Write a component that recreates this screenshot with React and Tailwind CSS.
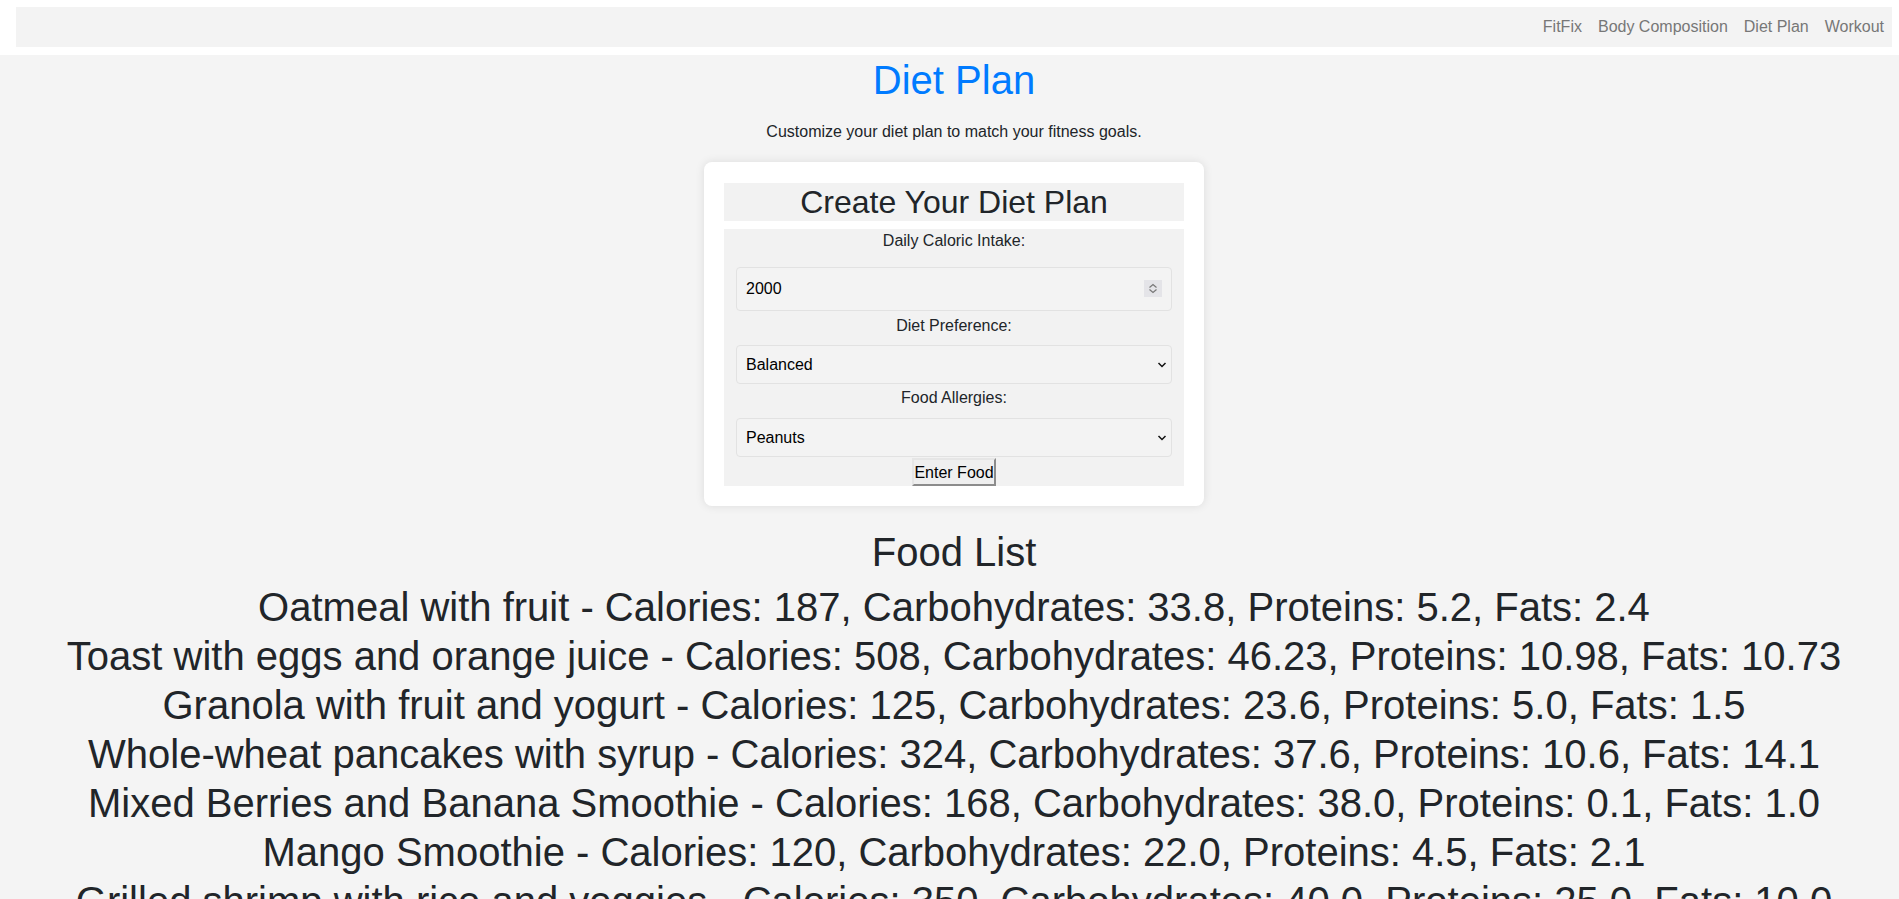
import { useState } from 'react';

const foods = [
  'Oatmeal with fruit - Calories: 187, Carbohydrates: 33.8, Proteins: 5.2, Fats: 2.4',
  'Toast with eggs and orange juice - Calories: 508, Carbohydrates: 46.23, Proteins: 10.98, Fats: 10.73',
  'Granola with fruit and yogurt - Calories: 125, Carbohydrates: 23.6, Proteins: 5.0, Fats: 1.5',
  'Whole-wheat pancakes with syrup - Calories: 324, Carbohydrates: 37.6, Proteins: 10.6, Fats: 14.1',
  'Mixed Berries and Banana Smoothie - Calories: 168, Carbohydrates: 38.0, Proteins: 0.1, Fats: 1.0',
  'Mango Smoothie - Calories: 120, Carbohydrates: 22.0, Proteins: 4.5, Fats: 2.1',
  'Grilled shrimp with rice and veggies - Calories: 350, Carbohydrates: 40.0, Proteins: 25.0, Fats: 10.0',
];

const Chevron = () => (
  <svg
    className="pointer-events-none absolute right-[5px] top-1/2 -translate-y-1/2"
    width="10"
    height="6"
    viewBox="0 0 10 6"
  >
    <path d="M1.5 1 L5 4.5 L8.5 1" fill="none" stroke="#111" strokeWidth="1.5" />
  </svg>
);

const SelectBox = ({ value, onChange, options, className = '' }) => (
  <div className={`relative h-[39px] ${className}`}>
    <select
      value={value}
      onChange={(e) => onChange(e.target.value)}
      className="h-full w-full appearance-none rounded border border-[#e2e2e2] bg-[#f3f3f3] pl-[9px] text-base text-black outline-none"
    >
      {options.map((o) => (
        <option key={o}>{o}</option>
      ))}
    </select>
    <Chevron />
  </div>
);

export default function App() {
  const [calories, setCalories] = useState('2000');
  const [pref, setPref] = useState('Balanced');
  const [allergy, setAllergy] = useState('Peanuts');

  return (
    <div className="h-screen overflow-hidden bg-white font-['Liberation_Sans',Arial,sans-serif] text-[#212529]">
      <header className="pt-[7px] pl-4 pr-[7px] pb-2">
        <nav className="flex h-10 items-center justify-end bg-[#f3f3f3] text-base text-[#777]">
          <a href="#" className="px-2">FitFix</a>
          <a href="#" className="px-2">Body Composition</a>
          <a href="#" className="px-2">Diet Plan</a>
          <a href="#" className="px-2">Workout</a>
        </nav>
      </header>

      <main className="h-full bg-[#f4f4f4]">
        <div className="ml-4 mr-[7px] pt-px text-center">
          <h1 className="text-[40px] leading-[48px] text-[#007bff]">Diet Plan</h1>
          <p className="mt-4 text-base leading-6">Customize your diet plan to match your fitness goals.</p>

          <div className="mx-auto mt-[18px] w-[500px] rounded-lg bg-white px-5 pt-[21px] pb-5 shadow-[0_0_10px_rgba(0,0,0,0.1)]">
            <h2 className="bg-[#f2f2f2] text-[32px] leading-[38px]">Create Your Diet Plan</h2>
            <form className="mt-2 flex flex-col bg-[#f2f2f2] px-3" onSubmit={(e) => e.preventDefault()}>
              <label className="block text-base leading-6">Daily Caloric Intake:</label>
              <div className="relative mt-[14px] h-[44px]">
                <input
                  type="text"
                  value={calories}
                  onChange={(e) => setCalories(e.target.value)}
                  className="h-full w-full rounded border border-[#e2e2e2] bg-[#f3f3f3] pl-[9px] text-base text-black outline-none"
                />
                <span className="pointer-events-none absolute right-[10px] top-[13px]">
                  <svg width="18" height="17" viewBox="0 0 18 17">
                    <rect width="18" height="17" fill="#e4e4e8" />
                    <path d="M5.5 7.5 L9 4.5 L12.5 7.5" fill="none" stroke="#777" strokeWidth="1.2" />
                    <path d="M5.5 9.5 L9 12.5 L12.5 9.5" fill="none" stroke="#777" strokeWidth="1.2" />
                  </svg>
                </span>
              </div>

              <label className="mt-[3px] block text-base leading-6">Diet Preference:</label>
              <SelectBox
                className="mt-[7px]"
                value={pref}
                onChange={setPref}
                options={['Balanced', 'Low Carb', 'High Protein', 'Vegetarian', 'Vegan']}
              />

              <label className="mt-[2px] block text-base leading-6">Food Allergies:</label>
              <SelectBox
                className="mt-2"
                value={allergy}
                onChange={setAllergy}
                options={['Peanuts', 'Gluten', 'Dairy', 'Shellfish', 'None']}
              />

              <button
                type="submit"
                className="mx-auto mt-px h-[28px] w-[84px] border-2 border-t-[#e6e6e6] border-l-[#e6e6e6] border-r-[#8c8c8c] border-b-[#8c8c8c] bg-[#efefef] pt-px text-base leading-none text-black"
              >
                Enter Food
              </button>
            </form>
          </div>

          <h2 className="mt-[22px] text-[40px] leading-[48px]">Food List</h2>
          <ul className="mt-[7px]">
            {foods.map((f) => (
              <li key={f} className="whitespace-nowrap text-[40px] leading-[49px]">
                {f}
              </li>
            ))}
          </ul>
        </div>
      </main>
    </div>
  );
}
